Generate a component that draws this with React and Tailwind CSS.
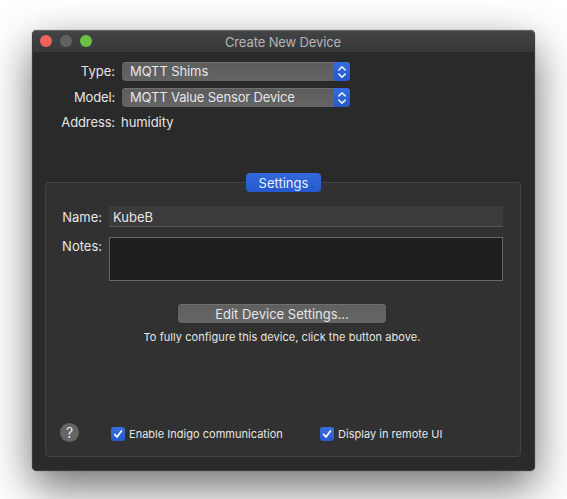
const FONT = "font-['Inter','Liberation_Sans',sans-serif]";

function Popup({ label, spacing }) {
  return (
    <div className="flex h-[19px] w-[228px] overflow-hidden rounded-[4px] bg-gradient-to-b from-[#5d5d5d] to-[#646464] shadow-[inset_0_1px_0_#707070,0_0_1px_#151515]">
      <div className={`flex-1 pl-2 pt-px ${spacing}`}>{label}</div>
      <div className="flex w-4 items-center justify-center bg-gradient-to-b from-[#336bdd] to-[#2558cb]">
        <svg width="10" height="14" viewBox="0 0 10 14" fill="none" stroke="#e8efff" strokeWidth="1.5" strokeLinecap="round" strokeLinejoin="round">
          <path d="M1.8 4.9 5 1.9 8.2 4.9M1.8 9.1 5 12.1 8.2 9.1" />
        </svg>
      </div>
    </div>
  );
}

function Check({ label }) {
  return (
    <label className="flex h-[14px] items-center gap-[4px] text-[11px]">
      <span className="flex size-[14px] items-center justify-center rounded-[3px] bg-gradient-to-b from-[#3870e0] to-[#2659cc]">
        <svg width="14" height="14" viewBox="0 0 14 14" fill="none" stroke="#fff" strokeWidth="1.7" strokeLinecap="round" strokeLinejoin="round">
          <path d="M3.7 7.4 6 10 10.4 3.9" />
        </svg>
      </span>
      <span className="whitespace-nowrap tracking-[0.02px]">{label}</span>
    </label>
  );
}

export default function App() {
  return (
    <div className={`h-[499px] w-[567px] overflow-hidden bg-white pl-8 pt-[30px] text-[13px] leading-4 text-[#e6e6e6] ${FONT}`}>
      <div className="flex h-[441px] w-[503px] flex-col rounded-[5px] bg-[#2a2a2a] shadow-[inset_0_0_0_1px_#3c3c3c,0_0_1px_#333,0_16px_44px_rgba(0,0,0,0.58)]">
        <header className="flex h-[22px] shrink-0 items-center rounded-t-[5px] bg-gradient-to-b from-[#424446] to-[#38393a] px-2 shadow-[inset_0_1px_0_#66696a]">
          <div className="flex w-[60px] gap-2">
            <span className="size-3 rounded-full bg-[#ec6459]" />
            <span className="size-3 rounded-full bg-[#5f6162]" />
            <span className="size-3 rounded-full bg-[#6cc144]" />
          </div>
          <h1 className="flex-1 pr-[61px] pt-px text-center tracking-[-0.12px] text-[#b4b5b6]">Create New Device</h1>
        </header>

        <div className="grid grid-cols-[83px_228px] items-center gap-x-[7px] gap-y-[7px] pt-[10px]">
          <span className="-mt-[2px] text-right">Type:</span>
          <Popup label="MQTT Shims" spacing="tracking-[-0.1px]" />
          <span className="-mt-[2px] text-right tracking-[-0.15px]">Model:</span>
          <Popup label="MQTT Value Sensor Device" spacing="tracking-[-0.15px]" />
          <span className="text-right tracking-[-0.12px]">Address:</span>
          <span className="-ml-px tracking-[-0.05px]">humidity</span>
        </div>

        <section className="ml-[13px] mr-[14px] mt-[52px] flex h-[275px] flex-col rounded-[4px] border border-[#434343] bg-[#313131]">
          <div className="-mt-[10px] pl-[200px]">
            <div className="flex h-[19px] w-[75px] items-center justify-center rounded-[4px] bg-gradient-to-b from-[#3269dc] to-[#2559cc] text-[#e8efff]">Settings</div>
          </div>
          <div className="mt-[14px] flex gap-[7px]">
            <span className="w-[56px] pt-[3px] text-right">Name:</span>
            <div className="h-[21px] w-[394px] border-b border-[#555] bg-[#3b3b3b] pl-1 pt-[3px]">KubeB</div>
          </div>
          <div className="mt-[10px] flex gap-[7px]">
            <span className="w-[56px] pt-px text-right">Notes:</span>
            <div className="h-[44px] w-[394px] border border-[#666] bg-[#1e1e1e]" />
          </div>
          <div className="ml-[132px] mt-[23px] flex h-[19px] w-[208px] items-center justify-center rounded-[4px] bg-gradient-to-b from-[#5f5f5f] to-[#666] shadow-[inset_0_1px_0_#707070,0_0_1px_#151515]">
            Edit Device Settings...
          </div>
          <p className="mt-[6px] pr-[2px] text-center text-[11px] tracking-[0.05px]">To fully configure this device, click the button above.</p>
          <div className="mt-[78px] flex items-center">
            <span className="ml-[14px] flex size-[19px] items-center justify-center rounded-full bg-[#656565] text-[14px]">?</span>
            <div className="ml-[32px] mt-[2px] w-[209px]"><Check label="Enable Indigo communication" /></div>
            <div className="mt-[2px]"><Check label="Display in remote UI" /></div>
          </div>
        </section>
      </div>
    </div>
  );
}
